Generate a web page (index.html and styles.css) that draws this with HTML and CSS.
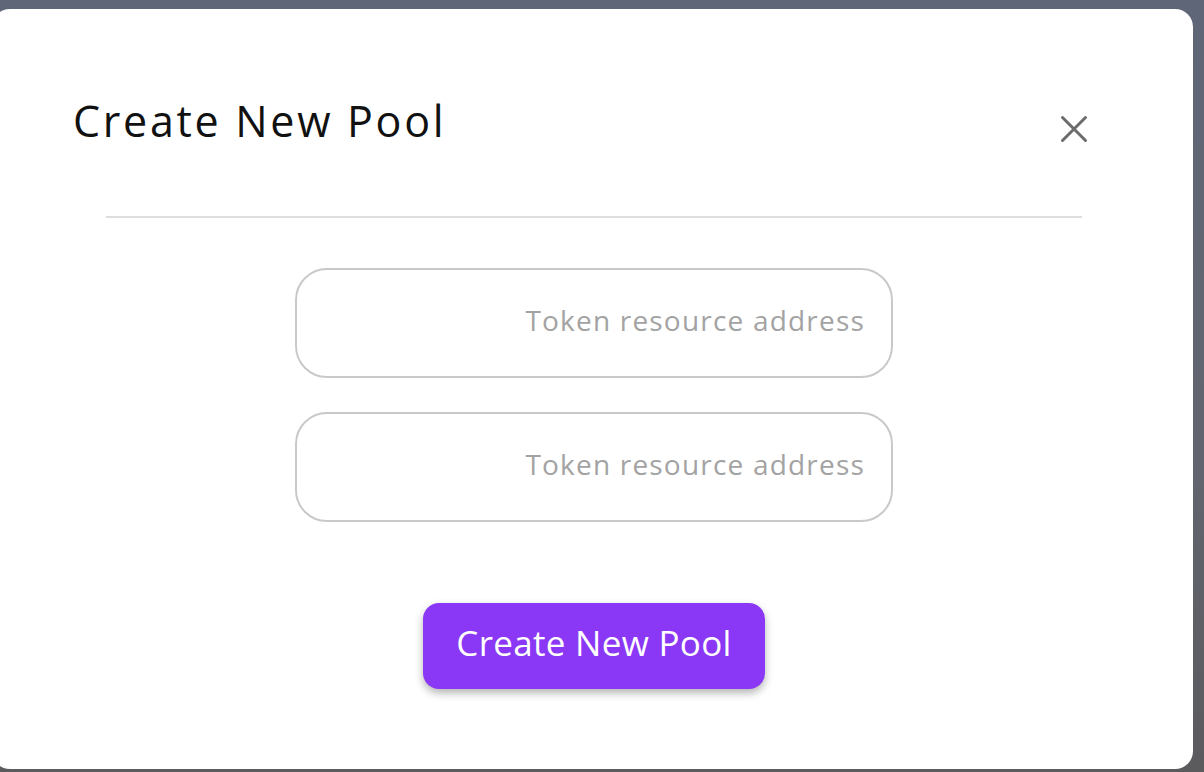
FILE: index.html
```html
<!DOCTYPE html>
<html>
<head>
<meta charset="utf-8">
<link rel="stylesheet" href="styles.css">
</head>
<body>
<div class="backdrop">
  <div class="modal">
    <div class="modal-header">
      <h2 class="modal-title">Create New Pool</h2>
      <button class="close-btn" aria-label="Close">
        <svg width="30" height="30" viewBox="0 0 30 30"><path d="M3.5 3.5 L26.5 26.5 M26.5 3.5 L3.5 26.5" stroke="#6b6b6b" stroke-width="3" stroke-linecap="round" fill="none"/></svg>
      </button>
    </div>
    <div class="divider"></div>
    <div class="form">
      <input class="field" type="text" placeholder="Token resource address">
      <input class="field" type="text" placeholder="Token resource address">
      <button class="submit">Create New Pool</button>
    </div>
  </div>
</div>
</body>
</html>
```
FILE: styles.css
```css
html, body {
  margin: 0;
  padding: 0;
  height: 100%;
}
body {
  background: linear-gradient(180deg, #5f6677 0%, #62656f 60%, #5b5b5e 100%);
  font-family: "Open Sans", "Noto Sans", sans-serif;
  overflow: hidden;
}
.backdrop {
  padding-top: 9px;
  padding-right: 11px;
}
.modal {
  margin-left: -8px;
  height: 760px;
  background: #fff;
  border-radius: 18px;
  box-sizing: border-box;
  display: flex;
  flex-direction: column;
}
.modal-header {
  display: flex;
  justify-content: space-between;
  align-items: flex-start;
  padding: 83px 104px 0 81px;
}
.modal-title {
  margin: 0;
  font-weight: 400;
  font-size: 43px;
  line-height: 58px;
  color: #111;
  letter-spacing: 2.7px;
}
.close-btn {
  margin-top: 22px;
  background: none;
  border: none;
  padding: 0;
  width: 30px;
  height: 30px;
  cursor: pointer;
}
.close-btn svg { display: block; }
.divider {
  margin: 66px 111px 0 114px;
  height: 2px;
  background: #dedede;
}
.form {
  display: flex;
  flex-direction: column;
  align-items: center;
  gap: 34px;
  padding-top: 50px;
  padding-left: 17px;
  padding-right: 14px;
}
.field {
  width: 598px;
  height: 110px;
  box-sizing: border-box;
  border: 2px solid #c9c9c9;
  border-radius: 32px;
  padding: 0 26px 6px;
  text-align: right;
  font-family: "Open Sans", "Noto Sans", sans-serif;
  font-size: 28px;
  letter-spacing: 1.2px;
  color: #333;
  outline: none;
}
.field::placeholder {
  color: #a3a3a3;
}
.submit {
  margin-top: 47px;
  width: 342px;
  height: 86px;
  padding: 0 0 8px;
  border: none;
  border-radius: 16px;
  background: #8a38f5;
  color: #fff;
  font-family: "Open Sans", "Noto Sans", sans-serif;
  font-size: 35px;
  letter-spacing: 0.3px;
  box-shadow: 0 4px 8px rgba(0,0,0,0.3);
  cursor: pointer;
}
```
